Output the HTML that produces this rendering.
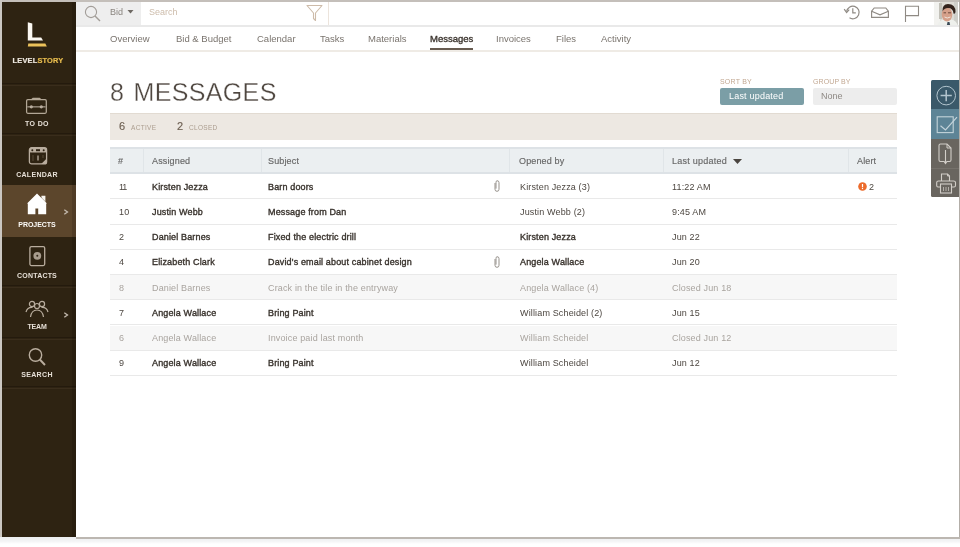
<!DOCTYPE html>
<html><head><meta charset="utf-8">
<style>
*{margin:0;padding:0;box-sizing:border-box}
html,body{width:960px;height:547px;overflow:hidden;background:#fff;font-family:"Liberation Sans",sans-serif}
.a,.nav,.lbl,.c{will-change:transform}
.a{position:absolute}
#frame-t{left:0;top:0;width:960px;height:2px;background:#c4bfba}
#frame-l{left:0;top:0;width:2px;height:537px;background:#cbc7c2}
#frame-r{left:959px;top:0;width:1px;height:539px;background:#b3aea8}
#frame-b{left:76px;top:537px;width:884px;height:2px;background:#bcb7b1}
#shadow{left:0;top:537px;width:960px;height:7px;background:linear-gradient(#eceef0,#f3f4f5 60%,#fff)}
#side{left:2px;top:2px;width:74px;height:535px;background:#2e2312}
.sd{position:absolute;left:0;width:74px;height:1px;background:#241a0d}
.sl{position:absolute;left:0;width:74px;height:1px;background:#3a2d1c}
.sec{position:absolute;left:0;width:74px;text-align:center}
.lbl{position:absolute;left:0;width:70px;text-align:center;color:#e6dfd6;font-weight:bold;font-size:7px;letter-spacing:0.35px;line-height:8px}
.chev{position:absolute;left:61px;width:6px;height:6px}
.nav{position:absolute;top:33px;font-size:9.5px;color:#7a746e;white-space:nowrap;line-height:12px}
.row{position:absolute;left:110px;width:787px;height:25.2px;border-bottom:1px solid #e9e9e9}
.c{position:absolute;top:0.5px;line-height:25px;font-size:9px;white-space:nowrap;color:#4d4741;letter-spacing:0.15px}
.b{color:#38322c;-webkit-text-stroke:0.35px #38322c}
.cl .c{color:#a9a49f;font-weight:normal;-webkit-text-stroke:0}
.cl{background:#f7f7f7}
</style></head><body>
<div class="a" id="frame-t"></div>
<div class="a" id="frame-l"></div>
<div class="a" id="frame-r"></div>
<div class="a" id="shadow"></div>
<div class="a" id="frame-b"></div>

<!-- sidebar -->
<div class="a" id="side">
  <!-- logo (coords relative to sidebar at 2,2) -->
  <svg class="a" style="left:22px;top:16px" width="26" height="32" viewBox="0 0 26 32">
    <path d="M3.8 4.3 L8.3 5.6 L8.3 19.5 L17.2 19.5 L19 22.5 L3.8 22.5 Z" fill="#fbf8f2"/>
    <path d="M4.3 25.5 L21.3 25.5 L22.8 28.4 L3.8 28.4 Z" fill="#ecc25a"/>
  </svg>
  <div class="lbl" style="top:54px;left:8px;width:56px;font-size:7.4px;letter-spacing:0.2px;color:#efe9e1;line-height:9px;-webkit-text-stroke:0.2px #efe9e1">LEVEL<span style="color:#e6bb4e;-webkit-text-stroke:0.2px #e6bb4e">STORY</span></div>
  <div class="sd" style="top:81px"></div><div class="sl" style="top:83px"></div>
  <!-- todo -->
  <svg class="a" style="left:23px;top:95px" width="24" height="19" viewBox="0 0 24 19">
    <g fill="none" stroke="#b3a796" stroke-width="1.25">
      <rect x="1.6" y="2.7" width="19.7" height="13.6" rx="1.2"/>
      <path d="M6.5 2.7 L8 1.3 H14.5 L16 2.7"/>
    </g>
    <path d="M2.2 9.8 H20.7" stroke="#8a7f71" stroke-width="1.6"/>
    <circle cx="6.3" cy="9.8" r="1.6" fill="#b9ad9e"/><circle cx="16.3" cy="9.8" r="1.6" fill="#b9ad9e"/>
  </svg>
  <div class="lbl" style="top:118px">TO DO</div>
  <div class="sd" style="top:131px"></div><div class="sl" style="top:133px"></div>
  <!-- calendar -->
  <svg class="a" style="left:26px;top:145px" width="20" height="19" viewBox="0 0 20 19">
    <rect x="1.4" y="0.7" width="17.2" height="16.2" rx="2.2" fill="none" stroke="#b9ad9e" stroke-width="1.3"/>
    <rect x="1.4" y="0.7" width="17.2" height="4.8" rx="1.5" fill="#b9ad9e"/>
    <circle cx="4.3" cy="3.2" r="1" fill="#2e2314"/><rect x="8" y="2.2" width="4" height="2" fill="#2e2314"/><circle cx="15.7" cy="3.2" r="1" fill="#2e2314"/>
    <path d="M10 8.5 V13.5" stroke="#b9ad9e" stroke-width="1.3"/>
    <path d="M5 8 V14 M15 8 V11" stroke="#5e5040" stroke-width="0.9"/>
    <path d="M13.2 17 L18.4 11.8 L18.4 17 Z" fill="#b9ad9e"/>
  </svg>
  <div class="lbl" style="top:169px;letter-spacing:0.3px">CALENDAR</div>
  <!-- projects -->
  <div class="a" style="left:0;top:183px;width:74px;height:52px;background:#5c462c"></div>
  <svg class="a" style="left:24px;top:191px" width="22" height="22" viewBox="0 0 22 22">
    <path d="M15.4 2.8 H19.4 V9.5 L15.4 5.6 Z" fill="#f6f3ee"/>
    <path d="M11 0.6 L21 10.6 L20.2 10.6 L20.2 21.2 L12.2 21.2 L12.2 15.6 L9.4 15.6 L9.4 21.2 L1.8 21.2 L1.8 10.6 L1 10.6 Z" fill="#fff" stroke="#5c462c" stroke-width="0.7" paint-order="stroke"/>
  </svg>
  <svg class="chev" style="top:207px" viewBox="0 0 6 6"><path d="M1.3 0.7 L4.5 3 L1.3 5.3" fill="none" stroke="#c4baae" stroke-width="1.3"/></svg>
  <div class="lbl" style="top:219px;color:#fdfbf8;letter-spacing:-0.05px">PROJECTS</div>
  <!-- contacts -->
  <svg class="a" style="left:26px;top:243px" width="18" height="22" viewBox="0 0 18 22">
    <rect x="1.9" y="1.6" width="14.8" height="19" rx="1.5" fill="none" stroke="#b9ad9e" stroke-width="1.3"/>
    <circle cx="9.3" cy="10.8" r="3.9" fill="#a89c8d"/>
    <circle cx="9.3" cy="10.8" r="1" fill="#2e2314"/>
  </svg>
  <div class="lbl" style="top:270px;letter-spacing:0.2px">CONTACTS</div>
  <div class="sd" style="top:283px"></div><div class="sl" style="top:285px"></div>
  <!-- team -->
  <svg class="a" style="left:23px;top:298px" width="24" height="18" viewBox="0 0 24 18">
    <g fill="none" stroke="#b9ad9e" stroke-width="1.2">
      <circle cx="7" cy="4" r="2.6"/><circle cx="17" cy="4" r="2.6"/>
      <circle cx="12" cy="6" r="2.5"/>
      <path d="M1 12 Q2.5 7 7.5 7.5"/><path d="M23 12 Q21.5 7 16.5 7.5"/>
      <path d="M5.5 17 Q6.5 10 12 10 Q17.5 10 18.5 17"/>
    </g>
  </svg>
  <svg class="chev" style="top:310px" viewBox="0 0 6 6"><path d="M1.3 0.7 L4.5 3 L1.3 5.3" fill="none" stroke="#c4baae" stroke-width="1.3"/></svg>
  <div class="lbl" style="top:321px;letter-spacing:-0.15px">TEAM</div>
  <div class="sd" style="top:335px"></div><div class="sl" style="top:337px"></div>
  <!-- search -->
  <svg class="a" style="left:24.5px;top:345px" width="20" height="20" viewBox="0 0 20 20">
    <circle cx="8.5" cy="8" r="6.2" fill="none" stroke="#b9ad9e" stroke-width="1.4"/>
    <path d="M12.8 12.5 L18 18" stroke="#b9ad9e" stroke-width="1.9"/>
  </svg>
  <div class="lbl" style="top:369px">SEARCH</div>
  <div class="sd" style="top:384px"></div><div class="sl" style="top:386px"></div>
  <div class="a" style="left:70px;top:0;width:4px;height:535px;background:rgba(0,0,0,0.13)"></div>
</div>

<!-- top bar -->
<div class="a" style="left:76px;top:2px;width:65px;height:23px;background:#eeeeee"></div>
<div class="a" style="left:76px;top:25px;width:883px;height:2px;background:#e9e9e9"></div>
<svg class="a" style="left:84px;top:5px" width="18" height="18" viewBox="0 0 18 18">
  <circle cx="7" cy="7" r="5.6" fill="none" stroke="#a29d98" stroke-width="1.1"/>
  <path d="M11 11 L16 16" stroke="#a29d98" stroke-width="1.4"/>
</svg>
<div class="a" style="left:110px;top:6px;font-size:9px;line-height:12px;color:#8a857f">Bid</div>
<svg class="a" style="left:127px;top:10px" width="7" height="4" viewBox="0 0 7 4"><path d="M0.5 0 H6.5 L3.5 3.6Z" fill="#6e6963"/></svg>
<div class="a" style="left:149px;top:6px;font-size:9px;line-height:12px;color:#cdbcab">Search</div>
<svg class="a" style="left:306px;top:4px" width="17" height="18" viewBox="0 0 17 18">
  <path d="M1 1.5 H16 L9.5 9 V16.5 L7.5 14.5 V9 Z" fill="none" stroke="#cdbba9" stroke-width="1.1" stroke-linejoin="round"/>
</svg>
<div class="a" style="left:328px;top:2px;width:1px;height:23px;background:#ece4dc"></div>
<!-- right icons -->
<svg class="a" style="left:843px;top:4px" width="19" height="17" viewBox="0 0 19 17">
  <path d="M3.6 7.5 A6.3 6.3 0 1 1 6.5 13.8" fill="none" stroke="#8f8a84" stroke-width="1.2"/>
  <path d="M1.2 5.2 L3.6 8.6 L6.2 5.6" fill="none" stroke="#8f8a84" stroke-width="1.2"/>
  <path d="M9.8 4.2 V8.8 H12.8" fill="none" stroke="#8f8a84" stroke-width="1.2"/>
</svg>
<svg class="a" style="left:871px;top:7px" width="18" height="11" viewBox="0 0 18 11">
  <path d="M3.2 1 H14.8 L17.4 4.2 V10.4 H0.6 V4.2 Z" fill="none" stroke="#8f8a84" stroke-width="1.15"/>
  <path d="M0.6 4.2 L9 7.8 L17.4 4.2" fill="none" stroke="#8f8a84" stroke-width="1.1"/>
</svg>
<svg class="a" style="left:904px;top:5px" width="16" height="17" viewBox="0 0 16 17">
  <path d="M1.5 17 V1.2 H14.5 V10.6 H1.5" fill="none" stroke="#8f8a84" stroke-width="1.1"/>
</svg>
<!-- avatar -->
<svg class="a" style="left:934px;top:2px" width="24" height="23" viewBox="0 0 24 23">
  <defs><filter id="bl" x="-30%" y="-30%" width="160%" height="160%"><feGaussianBlur stdDeviation="0.7"/></filter></defs>
  <rect width="24" height="23" fill="#dedcd6"/>
  <g filter="url(#bl)">
  <rect x="-2" y="-2" width="8" height="27" fill="#f2f2ef"/>
  <rect x="5" y="1" width="3" height="16" fill="#c2c0b8"/>
  <rect x="20" y="0" width="5" height="23" fill="#cfcfca"/>
  <path d="M3 25 Q5 17 11 17.5 L17 17.5 Q23 18 24 25Z" fill="#eef0ec"/>
  <ellipse cx="13" cy="12.5" rx="5.3" ry="7" fill="#d5a08a"/>
  <path d="M8.5 9.5 Q8 2 14 2 Q21.5 2 21.5 10 Q21 12.5 19.5 11.5 Q19 6 14 6 Q10 6 8.5 9.5Z" fill="#33241b"/>
  <path d="M9.5 10.8 H12 M14 10.8 H17" stroke="#6b4a3c" stroke-width="1"/>
  <path d="M10.5 15 Q13 17 16.5 15" stroke="#f0e4dc" stroke-width="1" fill="none"/>
  <path d="M13.5 20 L12.5 25 H16.5 L15.5 20Z" fill="#3a4a56"/>
  </g>
</svg>

<!-- nav -->
<div class="a" style="left:76px;top:50px;width:883px;height:2px;background:#efebe5"></div>
<div class="nav" style="left:110px">Overview</div>
<div class="nav" style="left:176px">Bid &amp; Budget</div>
<div class="nav" style="left:257px">Calendar</div>
<div class="nav" style="left:320px">Tasks</div>
<div class="nav" style="left:368px">Materials</div>
<div class="nav" style="left:430px;color:#3c352f;-webkit-text-stroke:0.35px #3c352f">Messages</div>
<div class="a" style="left:430px;top:48px;width:43px;height:2px;background:#675b50"></div>
<div class="nav" style="left:496px">Invoices</div>
<div class="nav" style="left:556px">Files</div>
<div class="nav" style="left:601px">Activity</div>

<!-- heading -->
<div class="a" style="left:110px;top:77px;font-size:25px;line-height:30px;color:#4f4740;letter-spacing:0.35px;word-spacing:2px;white-space:nowrap;-webkit-text-stroke:0.3px #fff">8 MESSAGES</div>

<!-- sort/group -->
<div class="a" style="left:720px;top:77px;font-size:7px;line-height:9px;color:#c2a892;letter-spacing:0.2px">SORT BY</div>
<div class="a" style="left:720px;top:88px;width:84px;height:17px;background:#7b9ea6;border-radius:2px"></div>
<div class="a" style="left:729px;top:91px;font-size:9px;line-height:11px;color:#fff;letter-spacing:0.2px">Last updated</div>
<div class="a" style="left:813px;top:77px;font-size:7px;line-height:9px;color:#c2a892;letter-spacing:0.1px">GROUP BY</div>
<div class="a" style="left:813px;top:88px;width:84px;height:17px;background:#ededed;border-radius:2px"></div>
<div class="a" style="left:821px;top:91px;font-size:9px;line-height:11px;color:#8e8984">None</div>

<!-- stats band -->
<div class="a" style="left:110px;top:113px;width:787px;height:27px;background:#ede8e2;border-top:1px solid #e2dbd2"></div>
<div class="a" style="left:119px;top:120px;font-size:11px;line-height:13px;color:#6d5f52;-webkit-text-stroke:0.15px #6d5f52">6</div>
<div class="a" style="left:131px;top:124px;font-size:6.5px;line-height:8px;color:#ab9d8f;letter-spacing:0.3px">ACTIVE</div>
<div class="a" style="left:177px;top:120px;font-size:11px;line-height:13px;color:#6d5f52;-webkit-text-stroke:0.15px #6d5f52">2</div>
<div class="a" style="left:189px;top:124px;font-size:6.5px;line-height:8px;color:#ab9d8f;letter-spacing:0.3px">CLOSED</div>

<!-- table header -->
<div class="a" style="left:110px;top:147px;width:787px;height:27px;background:#ebeff1;border-top:2px solid #dde2e6;border-bottom:2px solid #dde2e6"></div>
<div class="a" style="left:143px;top:149px;width:1px;height:23px;background:#e0e5e8"></div>
<div class="a" style="left:261px;top:149px;width:1px;height:23px;background:#e0e5e8"></div>
<div class="a" style="left:509px;top:149px;width:1px;height:23px;background:#e0e5e8"></div>
<div class="a" style="left:663px;top:149px;width:1px;height:23px;background:#e0e5e8"></div>
<div class="a" style="left:848px;top:149px;width:1px;height:23px;background:#e0e5e8"></div>
<div class="a" style="left:118px;top:155px;font-size:9px;line-height:12px;color:#676767;-webkit-text-stroke:0.15px #676767;letter-spacing:0.15px">#</div>
<div class="a" style="left:152px;top:155px;font-size:9px;line-height:12px;color:#676767;-webkit-text-stroke:0.15px #676767;letter-spacing:0.15px">Assigned</div>
<div class="a" style="left:268px;top:155px;font-size:9px;line-height:12px;color:#676767;-webkit-text-stroke:0.15px #676767;letter-spacing:0.15px">Subject</div>
<div class="a" style="left:519px;top:155px;font-size:9px;line-height:12px;color:#676767;-webkit-text-stroke:0.15px #676767;letter-spacing:0.15px">Opened by</div>
<div class="a" style="left:672px;top:155px;font-size:9px;line-height:12px;color:#676767;-webkit-text-stroke:0.15px #676767;letter-spacing:0.25px">Last updated</div>
<svg class="a" style="left:733px;top:159px" width="9" height="5" viewBox="0 0 9 5"><path d="M0 0 H9 L4.5 5Z" fill="#4a4540"/></svg>
<div class="a" style="left:857px;top:155px;font-size:9px;line-height:12px;color:#676767;-webkit-text-stroke:0.15px #676767;letter-spacing:0.15px">Alert</div>

<!-- rows -->
<div class="row" style="top:174.30px"><div class="c" style="left:9px;letter-spacing:-1.2px">11</div><div class="c b" style="left:42px">Kirsten Jezza</div><div class="c b" style="left:158px">Barn doors</div><svg class="a" style="left:384px;top:6px" width="6" height="12" viewBox="0 0 6 12"><path d="M1 3 V9.3 Q1 11.3 3 11.3 Q5 11.3 5 9.3 V2.6 Q5 0.7 3 0.7 Q2 0.7 2 2.6 V8.6" fill="none" stroke="#96918b" stroke-width="1"/></svg><div class="c" style="left:410px">Kirsten Jezza (3)</div><div class="c" style="left:562px">11:22 AM</div><svg class="a" style="left:747.5px;top:7.5px" width="9" height="9" viewBox="0 0 9 9"><circle cx="4.5" cy="4.5" r="4.3" fill="#ec6b2c"/><rect x="3.9" y="2" width="1.2" height="3.3" fill="#fff"/><rect x="3.9" y="6" width="1.2" height="1.1" fill="#fff"/></svg><div class="c" style="left:759px">2</div></div>
<div class="row" style="top:199.50px"><div class="c" style="left:9px">10</div><div class="c b" style="left:42px">Justin Webb</div><div class="c b" style="left:158px">Message from Dan</div><div class="c" style="left:410px">Justin Webb (2)</div><div class="c" style="left:562px">9:45 AM</div></div>
<div class="row" style="top:224.70px"><div class="c" style="left:9px">2</div><div class="c b" style="left:42px">Daniel Barnes</div><div class="c b" style="left:158px">Fixed the electric drill</div><div class="c b" style="left:410px">Kirsten Jezza</div><div class="c" style="left:562px">Jun 22</div></div>
<div class="row" style="top:249.90px"><div class="c" style="left:9px">4</div><div class="c b" style="left:42px">Elizabeth Clark</div><div class="c b" style="left:158px">David's email about cabinet design</div><svg class="a" style="left:384px;top:6px" width="6" height="12" viewBox="0 0 6 12"><path d="M1 3 V9.3 Q1 11.3 3 11.3 Q5 11.3 5 9.3 V2.6 Q5 0.7 3 0.7 Q2 0.7 2 2.6 V8.6" fill="none" stroke="#96918b" stroke-width="1"/></svg><div class="c b" style="left:410px">Angela Wallace</div><div class="c" style="left:562px">Jun 20</div></div>
<div class="row cl" style="top:275.10px"><div class="c" style="left:9px">8</div><div class="c b" style="left:42px">Daniel Barnes</div><div class="c b" style="left:158px">Crack in the tile in the entryway</div><div class="c" style="left:410px">Angela Wallace (4)</div><div class="c" style="left:562px">Closed Jun 18</div></div>
<div class="row" style="top:300.30px"><div class="c" style="left:9px">7</div><div class="c b" style="left:42px">Angela Wallace</div><div class="c b" style="left:158px">Bring Paint</div><div class="c" style="left:410px">William Scheidel (2)</div><div class="c" style="left:562px">Jun 15</div></div>
<div class="row cl" style="top:325.50px"><div class="c" style="left:9px">6</div><div class="c b" style="left:42px">Angela Wallace</div><div class="c b" style="left:158px">Invoice paid last month</div><div class="c" style="left:410px">William Scheidel</div><div class="c" style="left:562px">Closed Jun 12</div></div>
<div class="row" style="top:350.70px"><div class="c" style="left:9px">9</div><div class="c b" style="left:42px">Angela Wallace</div><div class="c b" style="left:158px">Bring Paint</div><div class="c" style="left:410px">William Scheidel</div><div class="c" style="left:562px">Jun 12</div></div>

<!-- toolbar -->
<div class="a" style="left:931px;top:80px;width:28px;height:117px;overflow:hidden;border-radius:1.5px 0 0 1.5px">
  <div class="a" style="left:0;top:0;width:28px;height:29px;background:#3a596a"></div>
  <div class="a" style="left:0;top:29px;width:28px;height:30px;background:#5d8496"></div>
  <div class="a" style="left:0;top:59px;width:28px;height:29px;background:#69655f"></div>
  <div class="a" style="left:0;top:88px;width:28px;height:29px;background:#69655f;border-top:1px solid #75716b"></div>
  <svg class="a" style="left:5px;top:5px" width="22" height="22" viewBox="0 0 22 22">
    <circle cx="10.2" cy="10.6" r="9.3" fill="none" stroke="#b3c5ce" stroke-width="1"/>
    <path d="M10.2 5 V16.2 M4.6 10.6 H15.8" stroke="#b3c5ce" stroke-width="1.5"/>
  </svg>
  <svg class="a" style="left:5px;top:36px" width="23" height="18" viewBox="0 0 23 18">
    <rect x="1.2" y="0.8" width="16" height="15.8" fill="none" stroke="#c3d3da" stroke-width="1.1"/>
    <path d="M4.5 9.7 L9.5 14 L21 1.2" fill="none" stroke="#c3d3da" stroke-width="1.2"/>
  </svg>
  <svg class="a" style="left:7px;top:63px" width="15" height="22" viewBox="0 0 15 22">
    <path d="M6 18.5 H2.5 Q1 18.5 1 17 V2.5 Q1 1 2.5 1 H9 L13 5 V17 Q13 18.5 11.5 18.5 H9" fill="none" stroke="#d2cec8" stroke-width="1.1"/>
    <path d="M9 1 V5 H13" fill="none" stroke="#d2cec8" stroke-width="1"/>
    <path d="M7.5 7 V19" stroke="#d2cec8" stroke-width="1.1"/>
    <path d="M5.2 18.2 L7.5 21.5 L9.8 18.2Z" fill="#d2cec8"/>
  </svg>
  <svg class="a" style="left:5px;top:93px" width="21" height="21" viewBox="0 0 21 21">
    <path d="M5.5 8 V1 H11.5 L13.5 3 V8" fill="none" stroke="#d2cec8" stroke-width="1.1"/>
    <path d="M11.5 1 V3 H13.5" fill="none" stroke="#d2cec8" stroke-width="0.9"/>
    <path d="M4 14 H2 Q0.7 14 0.7 12.5 V9.5 Q0.7 8 2.5 8 H17.5 Q19.5 8 19.5 9.5 V12.5 Q19.5 14 18 14 H16" fill="none" stroke="#d2cec8" stroke-width="1.1"/>
    <rect x="4.5" y="11" width="11" height="9" fill="none" stroke="#d2cec8" stroke-width="1.1"/>
    <path d="M7.5 14 V18 M10 14 V18 M12.5 14 V18" stroke="#d2cec8" stroke-width="0.7"/>
  </svg>
</div>

</body></html>
